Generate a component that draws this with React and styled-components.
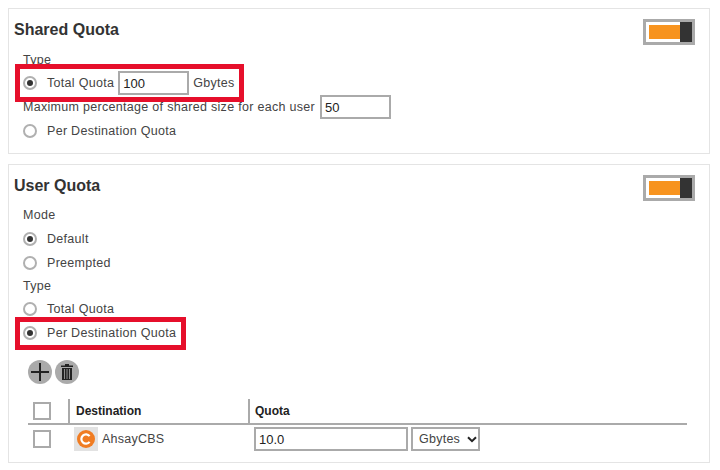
import React from 'react';
import styled, { createGlobalStyle } from 'styled-components';

const GlobalStyle = createGlobalStyle`
  html, body { margin: 0; padding: 0; background: #fff; }
  body { font-family: "Liberation Sans", Arial, sans-serif; color: #444; }
`;

const Page = styled.div`
  width: 702px;
  padding: 8px 0 0 8px;
  display: flex;
  flex-direction: column;
  gap: 10px;
`;

const Panel = styled.section`
  box-sizing: border-box;
  height: ${({ $height }) => $height}px;
  border: 1px solid #e4e4e4;
  padding: 9px 14px 0 5px;
`;

const TitleBar = styled.div`
  display: flex;
  justify-content: space-between;
  align-items: flex-start;
  height: ${({ $height }) => $height}px;
`;

const Title = styled.h2`
  margin: 2px 0 0;
  font-size: 16px;
  line-height: 20px;
  font-weight: 700;
  color: #333;
`;

const Toggle = styled.div`
  box-sizing: border-box;
  width: 52px;
  height: 26px;
  margin-top: 1px;
  border: 3px solid #aaa;
  background: #fff;
  display: flex;
  align-items: center;
  padding-left: 3px;
`;

const ToggleFill = styled.span`
  width: 32px;
  height: 14px;
  background: #f7931e;
`;

const ToggleKnob = styled.span`
  width: 12px;
  height: 20px;
  background: #333;
`;

const Body = styled.div`
  padding-left: 9px;
`;

const Row = styled.div`
  position: relative;
  display: flex;
  align-items: center;
  height: ${({ $height }) => $height || 24}px;
  font-size: 12.5px;
  letter-spacing: 0.3px;
  white-space: nowrap;
`;

const Label = styled.span`
  margin-bottom: 1px;
`;

const RadioDot = styled.span`
  box-sizing: border-box;
  flex: none;
  width: 14px;
  height: 14px;
  margin-right: 10px;
  border: 2px solid #b0b0b0;
  border-radius: 50%;
  background: #fff;
  display: flex;
  align-items: center;
  justify-content: center;
  &::after {
    content: '';
    display: ${({ $on }) => ($on ? 'block' : 'none')};
    width: 6px;
    height: 6px;
    border-radius: 50%;
    background: #333;
  }
`;

const TextInput = styled.div`
  box-sizing: border-box;
  flex: none;
  width: ${({ $width }) => $width}px;
  height: 24px;
  margin: ${({ $margin }) => $margin || '0'};
  border: 2px solid #aaa;
  padding-left: 3px;
  font-size: 13px;
  line-height: 21px;
  letter-spacing: 0;
  color: #222;
  background: #fff;
`;

const Callout = styled.div`
  position: absolute;
  box-sizing: border-box;
  left: -8px;
  top: ${({ $top }) => $top}px;
  width: ${({ $width }) => $width}px;
  height: ${({ $height }) => $height}px;
  border: 5px solid #e60f2b;
  pointer-events: none;
`;

const ActionBar = styled.div`
  display: flex;
  gap: 3px;
  margin: 15px 0 0 5px;
  height: 24px;
`;

const RoundButton = styled.span`
  width: 24px;
  height: 24px;
  border-radius: 50%;
  background: #aaa;
  display: flex;
  align-items: center;
  justify-content: center;
`;

const Table = styled.div`
  width: 659px;
  margin: 15px 0 0 5px;
`;

const TableRow = styled.div`
  box-sizing: border-box;
  display: grid;
  grid-template-columns: 40px 180px 1fr;
  height: ${({ $height }) => $height}px;
  border-bottom: ${({ $head }) => ($head ? '2px solid #aaa' : 'none')};
`;

const HeadCell = styled.div`
  display: flex;
  align-items: center;
  padding-left: ${({ $pad }) => $pad}px;
  border-left: ${({ $first }) => ($first ? 'none' : '2px solid #aaa')};
  font-size: 12px;
  font-weight: 700;
  color: #222;
`;

const Cell = styled.div`
  display: flex;
  align-items: center;
  padding-left: ${({ $pad }) => $pad}px;
  font-size: 12.5px;
  letter-spacing: 0.25px;
`;

const CheckBox = styled.span`
  box-sizing: border-box;
  display: block;
  width: 18px;
  height: 18px;
  border: 2px solid #aaa;
  background: #fff;
`;

const IconTile = styled.span`
  width: 24px;
  height: 24px;
  margin-right: 4px;
  background: #e2e2e2;
  display: flex;
  align-items: center;
  justify-content: center;
`;

const UnitSelect = styled.div`
  box-sizing: border-box;
  width: 69px;
  height: 24px;
  margin-left: 3px;
  border: 2px solid #aaa;
  padding-left: 6px;
  display: flex;
  align-items: center;
  gap: 7px;
  font-size: 12.5px;
  letter-spacing: 0.25px;
  color: #444;
`;

const Radio = ({ on, label }) => (
  <Row>
    <RadioDot $on={on} />
    <Label>{label}</Label>
  </Row>
);

const SwitchOn = () => (
  <Toggle>
    <ToggleFill />
    <ToggleKnob />
  </Toggle>
);

export default function App() {
  return (
    <>
      <GlobalStyle />
      <Page>
        <Panel $height={146}>
          <TitleBar $height={31}>
            <Title>Shared Quota</Title>
            <SwitchOn />
          </TitleBar>
          <Body>
            <Row $height={22}><Label>Type</Label></Row>
            <Row>
              <RadioDot $on />
              <Label>Total Quota</Label>
              <TextInput $width={71} $margin="0 4px 0 4px">100</TextInput>
              <Label>Gbytes</Label>
              <Callout $top={-7} $width={229} $height={38} />
            </Row>
            <Row>
              <Label>Maximum percentage of shared size for each user</Label>
              <TextInput $width={71} $margin="0 0 0 5px">50</TextInput>
            </Row>
            <Radio label="Per Destination Quota" />
          </Body>
        </Panel>
        <Panel $height={299}>
          <TitleBar $height={29}>
            <Title>User Quota</Title>
            <SwitchOn />
          </TitleBar>
          <Body>
            <Row><Label>Mode</Label></Row>
            <Radio on label="Default" />
            <Radio label="Preempted" />
            <Row $height={22}><Label>Type</Label></Row>
            <Radio label="Total Quota" />
            <Row>
              <RadioDot $on />
              <Label>Per Destination Quota</Label>
              <Callout $top={-4} $width={171} $height={33} />
            </Row>
            <ActionBar>
              <RoundButton>
                <svg width="18" height="18" viewBox="0 0 18 18">
                  <path d="M9 0v18M0 9h18" stroke="#222" strokeWidth="2" fill="none" />
                </svg>
              </RoundButton>
              <RoundButton>
                <svg width="12" height="16" viewBox="0 0 12 16">
                  <path d="M4 0h4v1.5h4V3H0V1.5h4z" fill="#222" />
                  <path d="M1 4h10v12H1z" fill="#222" />
                  <path d="M3.5 5v10M6 5v10M8.5 5v10" stroke="#aaa" strokeWidth="0.8" />
                </svg>
              </RoundButton>
            </ActionBar>
            <Table>
              <TableRow $head $height={26}>
                <HeadCell $first $pad={5}><CheckBox /></HeadCell>
                <HeadCell $pad={6}>Destination</HeadCell>
                <HeadCell $pad={5}>Quota</HeadCell>
              </TableRow>
              <TableRow $height={28}>
                <Cell $pad={5}><CheckBox /></Cell>
                <Cell $pad={6}>
                  <IconTile>
                    <svg width="18" height="18" viewBox="0 0 18 18">
                      <circle cx="9" cy="9" r="9" fill="#f07c22" />
                      <path d="M12.6 6.2A4.6 4.6 0 1 0 12.6 11.8" stroke="#fff" strokeWidth="2.2" fill="none" />
                    </svg>
                  </IconTile>
                  <Label>AhsayCBS</Label>
                </Cell>
                <Cell $pad={6}>
                  <TextInput $width={154}>10.0</TextInput>
                  <UnitSelect>
                    Gbytes
                    <svg width="10" height="7" viewBox="0 0 10 7">
                      <path d="M1 1.2l4 4 4-4" stroke="#222" strokeWidth="2" fill="none" />
                    </svg>
                  </UnitSelect>
                </Cell>
              </TableRow>
            </Table>
          </Body>
        </Panel>
      </Page>
    </>
  );
}
